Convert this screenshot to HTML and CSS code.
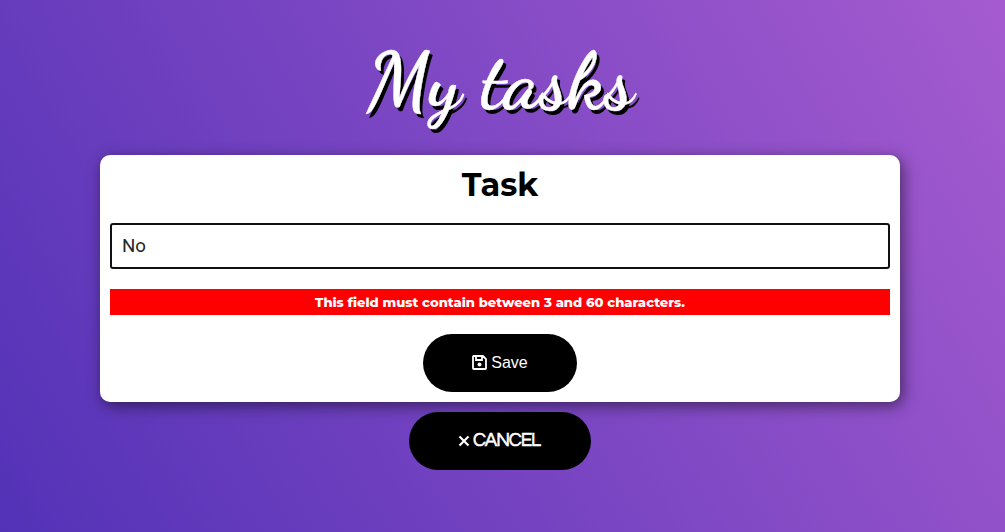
FILE: index.html
```html
<!DOCTYPE html>
<html lang="en">
<head>
<meta charset="utf-8">
<title>My tasks</title>
<link rel="stylesheet" href="styles.css">
</head>
<body>
<main class="page">
  <h1 class="title">My tasks</h1>
  <form class="card">
    <label class="label" for="task">Task</label>
    <input class="field" id="task" type="text" value="No">
    <p class="error">This field must contain between 3 and 60 characters.</p>
    <button class="button save" type="button">
      <svg class="disk" viewBox="0 0 15 15" aria-hidden="true"><path d="M1 1.8Q1 1 1.8 1H11L14 4V13.2Q14 14 13.2 14H1.8Q1 14 1 13.2ZM4 1V5H10V1"/><circle cx="7.5" cy="9.5" r="2"/></svg>
      <span>Save</span>
    </button>
  </form>
  <a class="button cancel" href="#">
    <svg class="cross" viewBox="0 0 12 12" aria-hidden="true"><path d="M1.5 1.5L10.5 10.5M10.5 1.5L1.5 10.5"/></svg>
    <span>CANCEL</span>
  </a>
</main>
</body>
</html>
```
FILE: styles.css
```css
* { box-sizing: border-box; }
body {
  margin: 0;
  min-height: 532px;
  background: linear-gradient(60deg, #5332b7, #a55bcf);
  font-family: Montserrat, Inter, sans-serif;
}
.page {
  width: 800px;
  margin-left: 100px;
  padding-top: 33px;
  display: flex;
  flex-direction: column;
  align-items: center;
}
.title {
  margin: 0;
  height: 122px;
  font: 700 80px/96px "Dancing Script", "Liberation Serif", cursive;
  color: #fff;
  text-shadow: 3px 4px 0 #000;
  -webkit-text-stroke: .4px #fff;
  white-space: nowrap;
}
.card {
  width: 800px;
  height: 247px;
  padding: 10px;
  display: flex;
  flex-direction: column;
  align-items: center;
  background: #fff;
  border-radius: 10px;
  box-shadow: 3px 4px 15px rgba(0, 0, 0, .5);
}
.label {
  height: 58px;
  font-size: 32px;
  font-weight: 700;
  line-height: 40px;
  color: #000;
}
.field {
  width: 100%;
  height: 46px;
  padding: 0 10px;
  border: 2px solid #101010;
  border-radius: 3px;
  outline: 0;
  font: 400 18.7px Roboto, sans-serif;
  color: #252525;
}
.error {
  width: 100%;
  height: 26px;
  margin: 20px 0 19px;
  background: #f00;
  color: #fff;
  font-size: 13.1px;
  font-weight: 800;
  line-height: 26px;
  text-align: center;
}
.button {
  height: 58px;
  flex: none;
  display: flex;
  align-items: center;
  justify-content: center;
  border: 0;
  border-radius: 29px;
  background: #000;
  color: #fff;
  text-decoration: none;
}
.save {
  width: 154px;
  gap: 4px;
  padding-bottom: 2px;
  font: 16px "Liberation Sans", sans-serif;
}
.cancel {
  width: 182px;
  margin-top: 10px;
  padding-right: 2px;
  padding-bottom: 1px;
  gap: 3px;
  font: 18.8px "Questrial", "Urbanist", "Josefin Sans", Lato, sans-serif;
  letter-spacing: -1.1px;
  -webkit-text-stroke: .6px #fff;
}
.disk { width: 15px; height: 15px; fill: none; stroke: #fff; stroke-width: 1.8; }
.disk circle { fill: #fff; stroke: none; }
.cross { width: 12px; height: 12px; stroke: #fff; stroke-width: 2.2; }
```
